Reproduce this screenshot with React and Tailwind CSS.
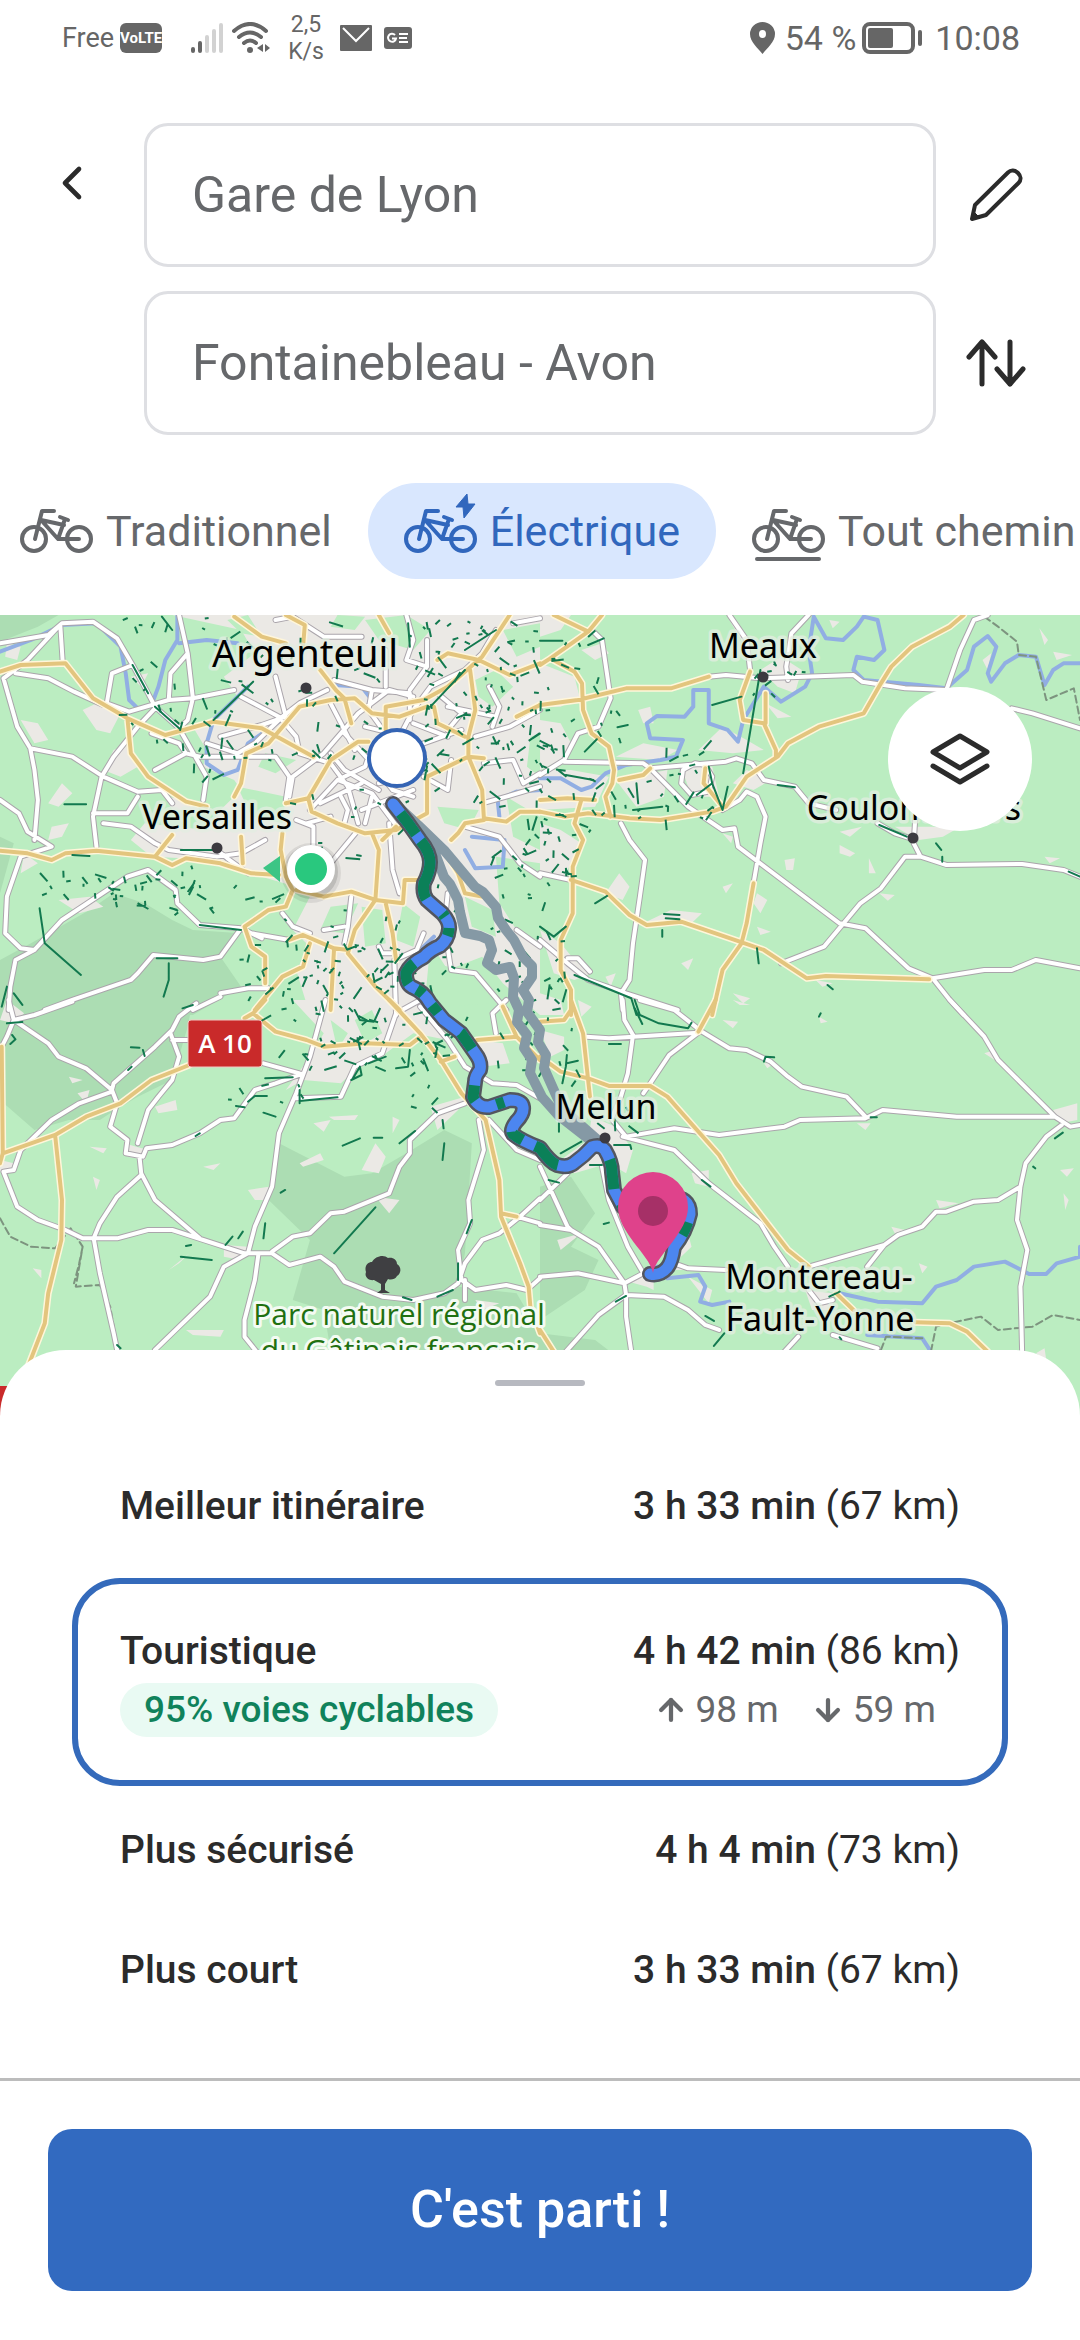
import React from "react";
import { ChevronLeft, ArrowUp, ArrowDown } from "lucide-react";

/* ---------- map data: four tiles, each 1568 units wide ---------- */

const TILES = [
  {
    transform: "translate(0 610) scale(0.3444 0.3333)",
    forest:
      "M0 1215L0 1050L90 1000L260 900L330 850L420 880L500 930L560 960L700 970L640 1040L700 1130L560 1215ZM0 15L170 15L110 50L0 95ZM0 680L40 700L0 850Z",
    urban:
      "M500 15L700 60L740 130L650 200L690 260L620 320L560 350L600 420L590 470L680 510L700 540L640 600L600 660L420 640L380 690L440 740L640 750L760 800L860 830L900 860L850 960L900 1010L860 1080L900 1215L1230 1215L1250 1000L1300 1080L1400 1040L1460 1120L1568 1215L1568 15ZM240 300L300 270L350 310L320 370L280 360ZM60 330L110 340L140 390L100 400ZM20 100L60 110L50 150L15 140ZM330 420L380 400L400 470L350 500L300 480ZM180 520L210 550L170 590L140 580ZM150 650L200 640L180 680L140 690ZM170 870L260 860L300 890L230 910ZM70 730L110 760L60 790ZM480 560L560 570L580 600L500 600ZM380 200L430 190L410 230Z",
    park:
      "M1060 30L1180 15L1250 60L1200 120L1100 90ZM1460 60L1568 40L1568 110L1500 140ZM1380 210L1440 180L1490 230L1430 290L1390 260ZM690 530L830 560L820 640L730 620ZM980 15L1060 20L1030 60L960 50ZM770 430L860 450L800 490L750 470ZM1270 590L1390 600L1360 660L1290 640ZM1470 560L1568 620L1568 720L1490 680ZM1440 740L1568 760L1568 1000L1500 960L1450 880ZM960 890L1040 880L1000 970L930 960ZM1050 890L1110 900L1120 1000L1060 1010ZM1170 880L1220 920L1200 1010L1150 990ZM1260 1060L1380 1090L1440 1180L1280 1190ZM1350 860L1430 900L1440 980L1370 950ZM1540 380L1568 370L1568 500L1530 470ZM660 30L720 15L760 80L700 70Z",
    water:
      "M0 125L90 90L180 45L280 40L350 110L365 190L375 270L400 295L440 285L460 230L480 150L515 90L515 15M520 100L600 90L690 100M720 230L620 330L600 400L600 460L650 495L690 480L720 400L790 350L830 320M970 225L1050 230L1080 270M1500 545L1445 570L1450 620M1370 680L1465 690L1460 770L1380 775L1350 720M1568 540L1500 545M1260 980L1210 1030",
    white:
      "M0 100L140 75L180 40L270 35L340 85L385 165L430 250L450 290L520 355M175 45L182 155M165 55L80 150L10 205L50 350L88 415L100 480L110 570L100 690M45 190L140 205L215 245L300 285M88 415L210 440L300 500L400 545L470 540L500 580M520 15L545 130L495 190L490 270M545 130L560 265L545 330L520 355M385 165L325 190L310 280L375 305L490 270L560 265L680 240M0 570L55 610L80 665L150 710L60 740L20 860L15 970L60 1015L100 1020M450 295L400 350L330 440L295 500L270 620L280 710M270 610L370 610L400 560M300 640L380 650L450 700L490 720M100 1020L180 930L370 800L430 780L510 840L515 880L580 945L700 955L640 1040L590 1050L445 1035L400 1090L380 1110L210 1170L130 1200M100 1020L45 1050L30 1130L25 1200M490 720L630 740L700 730L770 690M630 720L660 745L720 790M820 910L850 950L900 970M1000 1000L1010 950L1020 860M1130 640L1140 780L1160 850M440 370L520 400L540 430L450 480M540 430L580 440M600 400L690 430L740 400L820 320L870 280L950 240M520 355L600 500L590 570M580 440L800 440L840 500L830 570M700 260L810 320L860 380L870 430M640 380L760 345L830 320L800 200M840 560L850 500L940 430L1040 310L1130 240L1200 260M1150 1215L1145 1050L1210 1020L1230 970M1145 1030L1110 1030L1100 1010M1230 500L1300 540L1310 450M1380 380L1480 350L1568 300M1405 460L1490 450L1520 520L1568 490M1400 580L1470 560L1568 530M1350 650L1450 680L1510 760L1568 800M1300 850L1290 950L1310 1080L1380 1090L1470 1200M1500 960L1568 1010M1180 15L1200 90L1180 150L1240 170M800 30L850 20L940 80L1050 80M970 210L1080 240L1190 250L1190 330M1080 240L1070 300L1140 400M1440 60L1400 130L1350 180L1250 230L1200 300L1140 420M1490 40L1568 25M1000 370L1080 460L1140 540L1200 560M900 600L980 510L1060 470L1070 440M960 430L1000 480L1100 540M980 510L1080 550L1160 660M870 430L960 460L1010 530L1040 640M1100 520L1180 500M1050 600L1200 540M860 630L910 650L910 720M890 640L960 620M1040 660L960 760M930 580L1050 520M960 280L1000 360L1030 420M1060 350L1140 370M1230 400L1340 360M1200 340L1300 380M1270 250L1340 310L1300 360M1300 290L1440 320M1120 120L1120 230M1240 90L1240 170L1190 240M990 560L1010 600L1000 640M1080 560L1060 640M1420 230L1450 290L1430 350M640 1150L720 1135L780 1135M560 1200L640 1160M730 970L840 990M940 960L1000 950M700 955L760 985",
    yellow:
      "M0 185L60 165L190 160L270 265L370 325L480 375L620 335L760 355L910 440M370 325L380 430L430 500L540 575L600 590M0 722L80 730L150 750L190 730L280 722L450 740L500 765L540 745L640 760L730 790L810 795M450 740L500 675M700 680L705 760M680 20L760 80L830 100M830 15L885 45L880 110M930 180L975 240L1000 265L1020 340M680 560L700 520L715 430L780 400L870 290L960 270L1030 265L1080 310L1160 320L1240 290M830 580L895 565L960 450L1040 395L1070 395M895 565L905 605L980 640L1060 670L1150 660L1240 610L1240 500L1300 470L1360 440L1405 445M1100 15L1130 70M1480 15L1400 140L1300 230L1230 270L1120 290L1120 360M1270 150L1300 130L1390 150L1480 195L1568 160M1365 180L1380 300L1360 380L1360 440L1400 540L1405 625L1470 635L1510 605L1568 605M1260 290L1270 340L1350 380M1405 630L1350 640L1330 670L1310 690M1300 740L1330 790L1350 850L1400 860M820 670L815 720L830 800L850 840L830 890L780 900L710 950L730 1010L770 1040L770 1120M860 840L940 860L1020 845L1090 870L1170 880L1175 810L1240 810M1080 670L1100 720L1090 870L1030 960L1010 1030L1090 1130L1160 1200M1110 690L1150 650M1120 880L1140 970L1150 1050M840 990L880 975L970 1015L960 1200M900 1000L880 1070L820 1100L740 1200M970 1015L1010 1020M1500 320L1568 285",
    cycle:
      "M187 583L250 583M115 895L130 1000L235 1095M455 1045L515 1045M490 1060L490 1110L475 1160M385 165L430 250M620 330L735 215M450 290L520 355M580 945L700 960M20 1130L5 1190M40 1150L65 1185M1350 120L1440 60M1350 180L1250 290M525 720L620 720M210 735L260 738M470 20L500 60M1185 40L1190 110",
    border: "M0 0",
  },
  {
    transform: "translate(540 610) scale(0.3444 0.3333)",
    forest: "M0 0",
    urban:
      "M0 160L100 200L115 260L60 290L0 290ZM0 330L60 340L90 400L60 450L0 480ZM0 640L60 660L120 700L70 800L0 790ZM0 480L90 480L200 500L160 590L0 600ZM0 15L90 15L60 60L0 80ZM120 120L180 100L200 130L160 150ZM220 440L300 400L400 420L350 450ZM460 420L530 350L600 390L650 420L560 430ZM640 180L700 140L760 180L740 250L690 230ZM655 280L730 320L690 325ZM220 510L370 480L360 560L280 590ZM410 470L500 470L520 560L440 560ZM190 850L230 790L260 830L240 870ZM300 940L380 900L470 910L440 940ZM560 520L600 480L670 510L620 540ZM285 300L320 290L330 340L300 340ZM870 705L915 730L900 740L870 730ZM955 745L975 790L955 790ZM710 750L740 745L735 780L715 780ZM530 830L560 820L540 850ZM985 850L1030 855L1010 872ZM630 850L660 870L640 910L620 880ZM630 950L670 965L640 975ZM410 1060L445 1045L430 1080ZM190 1100L220 1090L205 1130ZM560 1150L610 1165L590 1180ZM800 1110L850 1120L820 1130ZM870 665L935 650L900 680ZM1030 650L1220 650L1170 680L1100 690ZM1465 740L1510 745L1480 760ZM1450 55L1475 90L1465 105ZM1490 125L1545 135L1500 150ZM1285 150L1310 130L1300 180ZM0 960L60 1000L100 1050L150 1090L100 1110L40 1090ZM0 1150L60 1170L70 1215L0 1215ZM840 30L870 35L850 55ZM550 30L580 60L590 100ZM530 670L560 680L555 700Z",
    park: "M0 0",
    water:
      "M0 505L60 505L120 540L150 530L190 490L250 465L350 450L395 440L415 390L320 385L310 340L340 318L420 320L445 290L445 240L490 240L490 340L545 360L575 395L590 330L650 230L700 275L770 230L790 190L780 120L795 20L830 85L880 90L920 50L940 20L980 30L1000 120L970 150L920 140L910 180L940 210L1100 225L1180 235L1240 180L1260 110L1300 78L1325 110L1300 190L1310 215L1350 160L1390 135L1440 140L1465 225L1490 180L1520 160L1568 160",
    white:
      "M550 15L600 90L610 180M780 15L730 70L715 170L720 210M490 200L540 195L640 205L910 195L935 215L1060 235L1180 240L1220 120L1260 30L1300 15M1370 295L1430 310L1568 355M155 65L180 90L205 265L170 350L110 370L70 450L0 495M70 455L300 460L320 475L540 455L570 445L615 460L650 510L740 530L780 580L860 600M320 475L430 590L530 660L565 655L575 710L870 940L945 955L1070 1075L1140 1105L1190 1170L1230 1215M450 460L415 480L410 520L440 555L490 545L500 500L480 465L450 460M530 600L580 570L600 545L630 560L655 620L640 700L620 820M235 640L260 690L305 750L290 860L270 1000L260 1110L235 1150L240 1200M1090 620L1085 700L1105 740L1060 740L990 835L930 880L825 1010L700 1060M1105 740L1180 765L1400 762L1520 780L1568 800M980 640L1030 670L1090 690M1140 1105L1290 1080L1370 1080L1440 1050L1568 1075M0 790L90 810M0 990L80 1060L140 1110L250 1150L400 1200M80 1045L110 1045L145 1085",
    yellow:
      "M180 15L140 65L30 145L0 165M40 15L140 65M30 145L100 185L122 220L125 300L150 370L200 410L215 480L210 520L190 560L205 620M0 285L110 270L250 235L380 235L490 200M610 185L580 270L590 330L650 340L685 420L685 440M655 250L655 340M0 605L70 620L140 610L260 625L350 630L500 605L540 590L600 500L690 440L720 400L810 350L940 310L990 220L1020 170L1080 110L1190 50L1230 15M230 510L300 495L320 475M480 475L475 520L530 590M0 570L80 565L160 570M120 570L100 640L125 690L95 770L95 910L60 990L60 1080L90 1140L90 1215M90 810L190 845L260 915L310 945L410 935L580 995L650 1020L775 1105L830 1098L1130 1108M620 820L600 940L585 1000L530 1080L500 1215",
    cycle:
      "M500 285L585 260M0 92L65 92M140 105L185 85M280 520L285 580M360 912L405 915M365 925L405 928M985 645L1065 680M1150 700L1165 720M1168 740L1168 755M75 495L155 510M160 880L195 858M130 425L165 388M630 1015L635 1060M100 1095L265 1165L280 1215M0 950L40 980L75 950M1535 785L1568 800M270 600L355 590M355 960L355 980M590 490L640 180M225 352L255 345M490 470L500 520L530 600L545 530M500 520L455 555M690 525L740 532M835 1125L850 1138",
    border:
      "M1290 20L1330 50L1385 95L1390 135L1440 140L1470 270L1550 235L1568 330",
  },
  {
    transform: "translate(0 1000) scale(0.3444 0.3333)",
    forest:
      "M0 0L560 0L545 80L500 240L400 290L320 340L290 360L200 360L100 390L0 300ZM810 430L1000 530L1080 520L1180 460L1290 390L1370 430L1360 600L1350 760L1330 860L1500 880L1568 1000L1568 1050L960 1050L940 930L850 900L900 720L780 600Z",
    urban:
      "M850 0L1230 0L1300 120L1200 100L1120 160L1040 200L990 250L880 240L830 270L900 170L940 100ZM1385 120L1460 130L1480 190L1400 200ZM360 430L430 450L420 480L370 470ZM450 320L510 300L515 330L460 340ZM225 280L260 270L250 310ZM720 570L780 560L770 600L740 600ZM870 490L930 460L940 480L880 500ZM1050 510L1090 430L1120 470L1100 520ZM1140 350L1160 360L1140 400ZM910 370L960 360L940 395ZM955 350L1040 345L1030 360L970 360ZM650 735L720 740L700 780L650 770ZM590 500L640 490L620 510ZM260 440L310 445L300 460ZM270 530L290 540L280 570ZM95 805L120 810L120 835ZM540 990L650 990L640 1010L560 1005ZM490 810L550 760L520 790ZM0 480L40 490L30 510L0 515ZM1090 590L1160 600L1130 640ZM1250 320L1350 290L1330 330L1270 390ZM1380 900L1450 910L1400 930ZM200 230L240 240L210 250ZM20 0L70 40L40 70L0 60Z",
    park: "M1030 60L1080 30L1110 100L1060 130ZM960 60L1010 100L980 150Z",
    water: "M0 0",
    white:
      "M25 0L40 60L100 45L210 5M40 60L20 110L0 150M40 60L140 130L170 170L250 205L325 270L340 310L320 380L370 420L365 460L415 470L425 445L500 435L580 400L640 360L680 355L740 270L800 250L880 220M325 270L330 250L450 140L500 90L520 50L570 10M495 100L520 170L500 240L460 290L430 330L400 430M325 275L230 310L150 360L60 450L40 510L10 515L50 620L110 660L190 690L240 715L340 715L430 690L500 690L590 720L710 760L790 760L840 795L930 770L970 800L1000 845L1110 890L1200 900L1290 880L1330 850L1350 790M405 470L410 520L450 600L580 715M410 525L340 590L290 670L272 715L290 820L330 1000L340 1050M945 0L900 170L860 280L810 400L790 560L740 680L720 760L650 800L610 890L540 960L450 1050M750 765L740 840L710 960L710 1010L745 1055M790 755L850 710L900 700L960 640L1000 635L1130 580L1160 500L1190 460L1190 420L1270 340L1350 310M765 190L870 220M860 295L990 290L1030 200L1110 160L1150 40L1220 0M1220 20L1300 120L1350 200L1430 250L1500 255L1568 295M1390 360L1405 450L1360 600L1365 670L1330 750L1340 840L1380 870L1470 855L1530 870L1568 835M1420 360L1500 450L1568 480M1350 840L1350 900M1350 790L1400 720L1450 700L1510 650L1568 595M1500 650L1568 670M1440 100L1430 40L1470 0M500 120L545 120",
    yellow:
      "M5 140L8 460L0 490M8 460L160 405L250 350L350 310L440 240L550 195M160 405L180 600L178 720L140 880L130 970L70 1130M770 0L735 40L710 55M735 40L800 95L890 120L940 140L1060 130L1190 135L1215 115M1130 0L1220 100L1280 180L1340 280L1410 360L1450 540L1455 650L1510 790L1535 860L1540 920L1568 1000M1280 185L1320 170M1385 120L1500 110L1460 20M1500 110L1568 180M1455 640L1500 650",
    cycle:
      "M970 760L1090 622M525 770L615 780M870 303L980 292M1290 430L1285 480M1285 360L1288 385M1160 430L1205 393M995 437L1045 415M1085 413L1110 413M380 142L405 143M415 150L420 168M720 305L740 288L775 288M765 338L800 350M685 318L710 322M770 235L850 232M765 715L770 670M655 735L675 710M692 715L705 695M1070 190L1120 170M870 310L870 270M1150 205L1185 200L1190 150M1330 790L1330 840M1355 700L1370 660M1270 890L1315 870M35 105L45 118L30 132M20 70L65 66M340 1035L350 1045M1030 30L1045 60L1085 65M1025 235L1045 200L1050 225L1020 240M1170 892L1195 900M540 738L555 735M580 400L568 408M530 25L560 15M372 210L382 200M815 578L828 570",
    border:
      "M0 655L30 710L90 740L160 745L205 685L240 740L220 860L290 855L320 920L335 1010M240 740L230 790L215 850",
  },
  {
    transform: "translate(540 1000) scale(0.3444 0.3333)",
    forest: "M0 560L90 530L160 640L90 740L170 780L130 870L0 960ZM0 1000L160 1020L210 1060L0 1060Z",
    urban:
      "M150 350L220 380L270 450L250 520L200 490L100 520L60 480L140 420ZM0 90L70 110L70 150L30 170ZM110 0L150 20L120 50ZM440 520L490 510L490 560L450 550ZM370 720L430 700L440 740L390 790L430 810L370 810ZM240 840L330 820L330 870L310 860ZM430 830L500 870L490 910ZM770 870L850 880L850 930L790 930ZM1490 330L1560 310L1560 360L1510 370ZM1290 160L1320 150L1320 180ZM810 50L835 65L815 70ZM530 60L575 65L560 85ZM560 0L610 15L580 15ZM920 370L960 370L945 390ZM650 190L680 190L660 205ZM1510 510L1550 505L1530 530ZM1520 580L1535 600L1525 630ZM1150 600L1215 610L1160 625ZM1020 680L1060 690L1030 700ZM1100 790L1125 800L1110 820ZM1350 675L1380 680ZM1440 1060L1465 1045L1470 1080ZM50 720L120 700L60 750Z",
    park: "M0 0",
    water:
      "M340 800L370 835L460 825L480 860L465 905L500 915L550 905M870 880L980 905L1110 910L1150 860L1210 840L1260 800L1350 785L1420 822L1470 822L1500 790L1568 770L1568 740M950 1005L1110 1015L1135 1055",
    white:
      "M240 0L245 60L270 105L255 220L235 290L210 350M135 110L200 115L460 98M290 0L390 30L470 95L550 145L600 150L670 185L720 230L760 260L890 290L945 350M945 355L755 360L710 380L520 405L390 385L250 410L210 360M945 355L995 330L1210 350L1495 350L1540 380L1568 375M1190 0L1290 110L1330 180L1495 350M460 98L375 165L320 250L300 280M240 410L390 450L490 550L640 670L680 740L720 800M1515 375L1470 410L1410 490L1395 560L1385 660L1415 750L1395 860L1400 1060M1395 560L1330 600L1260 605L1180 635L1150 635L1110 680L1040 705L1000 735L780 800M1000 735L950 800M0 600L80 520M0 500L80 680L90 690L0 675M90 690L170 740L245 850L110 820L0 830M245 850L250 885L170 945L75 1055M250 885L250 950L265 1055M250 885L360 890L430 930L480 975L520 990M245 850L300 820L255 740L200 600L180 500M390 790L430 805L540 810M780 870L810 910L850 900M850 1005L980 1045M750 1010L710 1055",
    yellow:
      "M90 0L125 100L145 290M0 65L70 60L90 30M0 170L60 215L140 235L200 258L320 258L370 290L520 465L570 550L720 750L780 800M510 0L460 95M860 880L910 930M1090 967L1190 970L1240 995L1300 1055M0 990L40 1055",
    cycle:
      "M275 0L290 45L345 70L430 85L440 68M275 25L297 72M78 165L75 200L65 250M78 190L110 182M200 132L235 132M60 460L120 425M25 540L55 548M145 495L180 495M215 435L262 435L265 447M470 540L495 560M220 905L250 888M480 948L505 963M505 1038L535 1000M1495 415L1518 398M960 352L978 352M810 50L815 40M650 185L655 170L680 172M840 890L870 875M185 672L200 668M1432 500L1438 505M55 370L55 395M870 1012L875 1018",
    border:
      "M1135 1055L1150 980L1210 965L1280 950L1330 990L1430 980L1490 945L1568 960M990 1050L1005 1010L1110 1015",
  },
];

/* Short cycle-lane strokes, scattered around town centres: [cx, cy, rx, ry, count] */
const CLUSTERS = [
  [400, 700, 170, 80, 70],
  [480, 690, 60, 70, 45],
  [520, 760, 60, 70, 32],
  [270, 730, 80, 50, 22],
  [150, 680, 30, 60, 12],
  [180, 630, 60, 18, 8],
  [180, 730, 50, 25, 10],
  [360, 800, 80, 60, 22],
  [90, 885, 50, 18, 22],
  [160, 890, 40, 20, 18],
  [230, 890, 60, 26, 10],
  [290, 960, 60, 40, 28],
  [340, 950, 60, 40, 26],
  [380, 1000, 50, 60, 28],
  [350, 1040, 50, 30, 24],
  [310, 1000, 40, 30, 10],
  [480, 940, 60, 60, 22],
  [520, 890, 30, 60, 18],
  [540, 960, 25, 50, 14],
  [560, 800, 40, 60, 26],
  [580, 690, 40, 60, 16],
  [640, 800, 60, 20, 12],
  [690, 780, 30, 40, 18],
  [780, 680, 30, 20, 12],
  [550, 1040, 30, 60, 18],
  [470, 1040, 60, 30, 18],
  [430, 1080, 30, 30, 10],
  [605, 1135, 25, 30, 10],
  [270, 1080, 50, 30, 8],
  [560, 850, 20, 30, 10],
];

function scatter() {
  let seed = 7;
  const rnd = () => {
    seed = (seed * 1103515245 + 12345) % 2147483648;
    return seed / 2147483648;
  };
  let d = "";
  for (const [cx, cy, rx, ry, count] of CLUSTERS) {
    for (let i = 0; i < count; i++) {
      const x = cx + (rnd() * 2 - 1) * rx;
      const y = Math.max(618, cy + (rnd() * 2 - 1) * ry);
      const len = 3 + rnd() * rnd() * 14;
      const a = rnd() * Math.PI;
      d += `M${x.toFixed(1)} ${y.toFixed(1)}l${(Math.cos(a) * len).toFixed(1)} ${(Math.sin(a) * len).toFixed(1)}`;
    }
  }
  return d;
}

const DASHES = scatter();

const ROUTE =
  "M393 804L408 823L420 840Q430 852 430 862Q430 872 424 883Q422 893 427 900Q436 908 442 913Q450 922 449 929Q448 940 440 946Q430 950 424 957Q410 964 406 973Q406 984 412 987Q424 992 430 1003L444 1020L461 1033L475 1053Q482 1062 480 1070Q475 1076 475 1082L473 1097Q478 1108 489 1107L510 1100Q522 1100 523 1107Q524 1114 516 1122Q510 1130 513 1134Q520 1140 540 1148Q550 1162 557 1165Q568 1168 574 1163Q584 1156 592 1147Q600 1144 605 1150Q612 1162 612 1172L614 1190L623 1207L645 1215L670 1198Q690 1196 690 1214Q686 1232 674 1247Q672 1262 667 1268Q660 1276 650 1274";

const ALTERNATIVES =
  "M393 802L420 827L444 850L475 887L483 892L496 907L498 918L506 930L514 940L523 957L532 966L532 977L523 990L529 1000L527 1012L540 1030L538 1042L546 1055L544 1068L556 1095L562 1108L575 1120L600 1142M430 840L444 877L450 884L458 900L460 912L465 933L480 936L489 940L492 950L487 963L496 970L510 967L514 978L513 997L519 1010L517 1022L527 1035L524 1048L532 1060L530 1073L542 1097L558 1115L590 1140";

const TOWNS = [
  { name: "Argenteuil", x: 305, y: 667, size: 38, dot: [306, 688] },
  { name: "Versailles", x: 217, y: 829, dot: [217, 848] },
  { name: "Meaux", x: 763, y: 658, dot: [763, 677] },
  { name: "Coulommiers", x: 914, y: 820, dot: [913, 838] },
  { name: "Melun", x: 606, y: 1119, dot: [605, 1138] },
  { name: "Montereau-", x: 819, y: 1289 },
  { name: "Fault-Yonne", x: 820, y: 1331 },
];

function Layer({ field, ...props }) {
  return TILES.map((tile) => (
    <g key={tile.transform} transform={tile.transform}>
      <path d={tile[field]} vectorEffect="non-scaling-stroke" {...props} />
    </g>
  ));
}

function RouteMap() {
  return (
    <svg
      viewBox="0 615 1080 801"
      preserveAspectRatio="xMidYMid slice"
      className="block aspect-[1080/801] w-full bg-[#bbedc1]"
      role="img"
      aria-label="Carte de l'itinéraire"
    >
      <rect x="0" y="615" width="1080" height="801" fill="#bbedc1" />
      <g fill="none" strokeLinejoin="round" strokeLinecap="round">
        <Layer field="forest" fill="#acddb3" />
        <Layer field="urban" fill="#ebe9e5" />
        <Layer field="park" fill="#bbedc1" />
        <Layer field="water" stroke="#91aee3" strokeWidth="4" />
        <Layer field="border" stroke="#7d947f" strokeWidth="2" strokeDasharray="7 4" />
        <Layer field="white" stroke="#aaa5ab" strokeWidth="6" />
        <Layer field="white" stroke="#ffffff" strokeWidth="4" />
        <Layer field="yellow" stroke="#fff6da" strokeWidth="7" />
        <Layer field="yellow" stroke="#e3c57e" strokeWidth="4" />
        <Layer field="cycle" stroke="#12794f" strokeWidth="2" />
        <path d={DASHES} stroke="#12794f" strokeWidth="2" strokeLinecap="butt" />
        <path d={ALTERNATIVES} stroke="#8599a5" strokeWidth="10" />
        <path d={ROUTE} stroke="#53565f" strokeWidth="16" />
        <path d={ROUTE} stroke="#4c86f0" strokeWidth="11" />
        <path
          d={ROUTE}
          stroke="#0b8058"
          strokeWidth="11"
          strokeLinecap="butt"
          strokeDasharray="0 12 26 8 62 22 4 12 8 44 24 10 8 14 10 30 20 40 16 24 8 50 14 14 30 66 30 16 30 12 24 30 14 60 26 20"
        />
      </g>

      <g
        fontFamily='"Noto Sans", "Open Sans", sans-serif'
        textAnchor="middle"
        fill="#000000"
        stroke="#e3eee1"
        strokeOpacity="0.75"
        strokeWidth="7"
        strokeLinejoin="round"
        paintOrder="stroke"
      >
        {TOWNS.map((town) => (
          <text key={town.name} x={town.x} y={town.y} fontSize={town.size || 34}>
            {town.name}
          </text>
        ))}
      </g>
      {TOWNS.filter((town) => town.dot).map((town) => (
        <circle key={town.name} cx={town.dot[0]} cy={town.dot[1]} r="5.5" fill="#3c3a40" />
      ))}

      <path
        d="M374 1280c-5 1-10-3-8-8-2-6 2-10 6-10 3-6 12-8 16-4 5-1 9 2 9 6 5 3 4 10 0 12-2 4-7 4-9 3l-3 5v6l5 3h-13l4-3v-6z"
        fill="#3f3f42"
      />
      <g
        fontFamily='"Open Sans", "Noto Sans", sans-serif'
        fontSize="30"
        textAnchor="middle"
        fill="#1f7010"
        stroke="#f4fbf3"
        strokeWidth="6"
        strokeLinejoin="round"
        paintOrder="stroke"
      >
        <text x="399" y="1325">Parc naturel régional</text>
        <text x="399" y="1361">du Gâtinais français</text>
      </g>

      <rect x="188" y="1020" width="74" height="47" rx="3" fill="#c92a2a" stroke="#f2c9c4" strokeWidth="1" />
      <text
        x="225"
        y="1053"
        textAnchor="middle"
        fill="#ffffff"
        fontFamily='"Open Sans", "Noto Sans", sans-serif'
        fontWeight="600"
        fontSize="26"
      >
        A 10
      </text>
      <rect x="-30" y="1386" width="40" height="47" fill="#c92a2a" />

      <circle cx="397" cy="758" r="28" fill="#ffffff" stroke="#3464b4" strokeWidth="4" />

      <circle cx="311" cy="873" r="30" fill="#000000" fillOpacity="0.08" />
      <circle cx="311" cy="872" r="27" fill="#000000" fillOpacity="0.12" />
      <path d="M263 868L280 856V882Z" fill="#3cc585" />
      <circle cx="311" cy="869" r="24" fill="#ffffff" />
      <circle cx="311" cy="869" r="16" fill="#29c87e" />

      <path
        d="M653 1273C650 1255 618 1233 618 1207A35 35 0 0 1 688 1207C688 1233 656 1255 653 1273Z"
        fill="#df428b"
      />
      <circle cx="653" cy="1211" r="15" fill="#a63067" />
    </svg>
  );
}

/* ---------- icons ---------- */

function BikeIcon({ electric, ground }) {
  return (
    <svg width="74" height="72" viewBox="0 0 74 72" fill="none" className="shrink-0 overflow-visible" aria-hidden="true">
      <g stroke="currentColor" strokeWidth="4" strokeLinecap="round" strokeLinejoin="round">
        <circle cx="14" cy="44" r="12" />
        <circle cx="59" cy="44" r="12" />
        <path d="M15 44L22 16H34" />
        <path d="M21 25L44 30M21 25L38 44H59M38 44L45 24M40 22L48 25" />
      </g>
      {electric && <path d="M63 -1L52 12H59L60 23L71 9H64Z" fill="currentColor" stroke="currentColor" strokeWidth="1" strokeLinejoin="round" />}
      {ground && <path d="M5 64H67" stroke="currentColor" strokeWidth="4" strokeLinecap="round" />}
    </svg>
  );
}

function PencilIcon() {
  return (
    <svg width="54" height="54" viewBox="0 0 54 54" fill="none" stroke="currentColor" strokeWidth="4" strokeLinecap="round" strokeLinejoin="round" aria-hidden="true">
      <path d="M3 51L6 37L39 4.500C42 1.500 46 2 49 5C52 8 52.500 12 49.500 15L17 47Z" />
      <path d="M5 44L10 49L3 51Z" fill="currentColor" strokeWidth="1" />
    </svg>
  );
}

function SwapIcon() {
  return (
    <svg width="60" height="48" viewBox="0 0 60 48" fill="none" stroke="currentColor" strokeWidth="5" strokeLinecap="round" strokeLinejoin="round" aria-hidden="true">
      <path d="M16 45V3M3 18L16 3L29 18M44 3V45M31 30L44 45L57 30" />
    </svg>
  );
}

function LayersIcon() {
  return (
    <svg width="60" height="52" viewBox="0 0 60 52" fill="none" stroke="currentColor" strokeWidth="5" strokeLinecap="round" strokeLinejoin="round" aria-hidden="true">
      <path d="M30 3L57 19L30 35L3 19ZM3 33L30 49L57 33" />
    </svg>
  );
}

function SignalIcon() {
  return (
    <svg width="34" height="32" viewBox="0 0 34 32" strokeWidth="4" strokeLinecap="round" aria-hidden="true">
      <path d="M3 27V29M10 21V29" stroke="#666666" />
      <path d="M17 15V29M24 9V29M31 3V29" stroke="#d2d2d2" />
    </svg>
  );
}

function WifiIcon() {
  return (
    <svg width="38" height="32" viewBox="0 0 38 32" fill="none" stroke="#666666" strokeWidth="4" strokeLinecap="round" aria-hidden="true">
      <path d="M2 9Q18 -5 34 9M7 15Q18 6 29 15M12 21Q18 16 24 21" />
      <circle cx="18" cy="28" r="3" fill="#666666" stroke="none" />
      <path d="M31 22V30L25 26ZM33 22V30L38 26Z" fill="#666666" stroke="none" />
    </svg>
  );
}

function MailIcon() {
  return (
    <svg width="32" height="26" viewBox="0 0 32 26" fill="none" aria-hidden="true">
      <rect width="32" height="26" rx="1" fill="#666666" />
      <path d="M3 3L16 16L29 3" stroke="#ffffff" strokeWidth="2" />
    </svg>
  );
}

function NewsIcon() {
  return (
    <svg width="28" height="22" viewBox="0 0 28 22" fill="none" stroke="#ffffff" strokeWidth="2" aria-hidden="true">
      <rect width="28" height="22" rx="3" fill="#666666" stroke="none" />
      <path d="M11 8A4 4 0 1 0 12 11.500H8M15 7H24M15 11H23M15 15H24" />
    </svg>
  );
}

function LocationIcon() {
  return (
    <svg width="25" height="32" viewBox="0 0 25 32" fill="#666666" aria-hidden="true">
      <path fillRule="evenodd" d="M12.500 32C8 26 0 20 0 12A12.500 12 0 0 1 25 12C25 20 17 26 12.500 32ZM12.500 8A3.500 4 0 1 0 12.500 16A3.500 4 0 1 0 12.500 8Z" />
    </svg>
  );
}

function BatteryIcon() {
  return (
    <svg width="61" height="32" viewBox="0 0 61 32" aria-hidden="true">
      <rect x="2" y="2" width="49" height="28" rx="6" fill="none" stroke="#666666" strokeWidth="4" />
      <rect x="6" y="6" width="25" height="20" rx="2" fill="#666666" />
      <rect x="56" y="8" width="4" height="16" rx="2" fill="#666666" />
    </svg>
  );
}

/* ---------- sections ---------- */

function StatusBar() {
  return (
    <div className="flex h-[76px] items-center justify-between pl-[62px] pr-[60px] text-[#666666]">
      <div className="flex items-center">
        <span className="text-[27px] leading-8">Free</span>
        <span className="ml-1.5 flex h-[30px] w-[42px] items-center justify-center rounded-md bg-[#666666] text-[15px] font-bold text-white">
          VoLTE
        </span>
        <span className="ml-7"><SignalIcon /></span>
        <span className="ml-2"><WifiIcon /></span>
        <span className="ml-[18px] text-center text-[23px] leading-[27px]">
          2,5
          <br />
          K/s
        </span>
        <span className="ml-4"><MailIcon /></span>
        <span className="ml-3"><NewsIcon /></span>
      </div>
      <div className="flex items-center text-[34px] leading-10">
        <LocationIcon />
        <span className="ml-2.5">54 %</span>
        <span className="ml-1.5"><BatteryIcon /></span>
        <span className="ml-3">10:08</span>
      </div>
    </div>
  );
}

function PlaceField({ label, value }) {
  return (
    <input
      type="text"
      aria-label={label}
      defaultValue={value}
      className="block h-36 min-w-0 flex-1 rounded-3xl border-[3px] border-[#dedfe3] bg-white px-[45px] text-[50px] text-[#66686b] outline-none"
    />
  );
}

function SearchHeader() {
  return (
    <header className="flex pt-[47px]">
      <button type="button" aria-label="Retour" className="flex h-[120px] w-36 items-center justify-center text-[#2b2b2b]">
        <ChevronLeft size={56} strokeWidth={2} />
      </button>
      <div className="flex min-w-0 flex-1 flex-col gap-6">
        <div className="flex items-center">
          <PlaceField label="Départ" value="Gare de Lyon" />
          <button type="button" aria-label="Modifier" className="flex w-36 justify-center pr-6 text-[#2b2b2b]">
            <PencilIcon />
          </button>
        </div>
        <div className="flex items-center">
          <PlaceField label="Arrivée" value="Fontainebleau - Avon" />
          <button type="button" aria-label="Inverser" className="flex w-36 justify-center pr-6 text-[#2b2b2b]">
            <SwapIcon />
          </button>
        </div>
      </div>
    </header>
  );
}

function BikeTabs() {
  const tab = "flex h-24 shrink-0 items-center gap-3 whitespace-nowrap rounded-full text-[43px]";
  return (
    <nav className="mt-12 mb-9 flex overflow-hidden" aria-label="Type de vélo">
      <button type="button" className={`${tab} pl-5 pr-9 text-[#66686b]`}>
        <BikeIcon />
        Traditionnel
      </button>
      <button type="button" aria-pressed="true" className={`${tab} bg-[#d9e7fe] px-9 text-[#3167bd]`}>
        <BikeIcon electric />
        Électrique
      </button>
      <button type="button" className={`${tab} pl-9 text-[#66686b]`}>
        <BikeIcon ground />
        Tout chemin
      </button>
    </nav>
  );
}

function RouteOption({ name, time, distance, selected }) {
  return (
    <li>
      <button
        type="button"
        aria-pressed={selected ? "true" : "false"}
        className={
          selected
            ? "mt-3 mb-1 flex h-52 w-full items-center rounded-[48px] border-[6px] border-[#346abb] px-[42px]"
            : "flex h-[120px] w-full items-center px-12"
        }
      >
        <span className="flex flex-1 flex-col gap-2">
          <span className="flex items-center justify-between text-[39px] leading-[48px] text-[#2b2b2b]">
            <span className="font-medium">{name}</span>
            <span>
              <strong className="font-medium">{time}</strong> ({distance})
            </span>
          </span>
          {selected && (
            <span className="flex items-center justify-between">
              <span className="rounded-full bg-[#e9faf3] px-6 text-[37px] font-medium leading-[54px] text-[#10825b]">
                95% voies cyclables
              </span>
              <span className="flex items-center gap-8 pr-6 text-[37px] leading-[48px] text-[#66686b]">
                <span className="flex items-center gap-2">
                  <ArrowUp size={34} strokeWidth={3} />
                  98 m
                </span>
                <span className="flex items-center gap-2">
                  <ArrowDown size={34} strokeWidth={3} />
                  59 m
                </span>
              </span>
            </span>
          )}
        </span>
      </button>
    </li>
  );
}

const ROUTES = [
  { name: "Meilleur itinéraire", time: "3 h 33 min", distance: "67 km" },
  { name: "Touristique", time: "4 h 42 min", distance: "86 km", selected: true },
  { name: "Plus sécurisé", time: "4 h 4 min", distance: "73 km" },
  { name: "Plus court", time: "3 h 33 min", distance: "67 km" },
];

export default function App() {
  return (
    <div className="min-h-screen overflow-hidden bg-white font-[Roboto,sans-serif]">
      <StatusBar />
      <SearchHeader />
      <BikeTabs />
      <div className="relative">
        <RouteMap />
        <button
          type="button"
          aria-label="Calques"
          className="absolute right-12 top-[72px] flex size-36 items-center justify-center rounded-full bg-white text-[#2b2b2b]"
        >
          <LayersIcon />
        </button>
      </div>
      <main className="relative -mt-[66px] rounded-t-[66px] bg-white pt-[30px]">
        <div className="mx-auto h-1.5 w-[90px] rounded-full bg-[#b7b9c0]" />
        <ul className="mt-[60px] px-[72px] pb-12">
          {ROUTES.map((route) => (
            <RouteOption key={route.name} {...route} />
          ))}
        </ul>
        <footer className="border-t-[3px] border-[#bcbcbc] px-12 py-12">
          <button type="button" className="h-[162px] w-full rounded-3xl bg-[#326ac0] text-[52px] font-medium text-white">
            C'est parti !
          </button>
        </footer>
      </main>
    </div>
  );
}
